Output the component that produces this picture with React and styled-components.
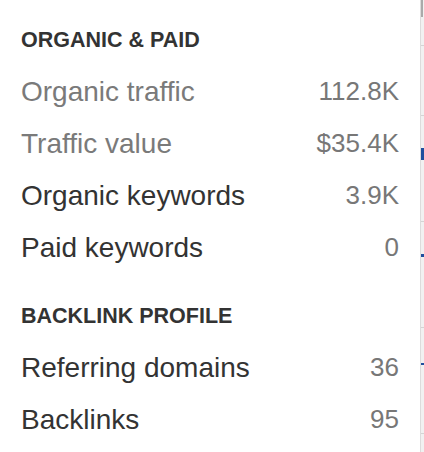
import React from "react";
import styled, { createGlobalStyle } from "styled-components";

const sections = [
  {
    title: "ORGANIC & PAID",
    rows: [
      { label: "Organic traffic", value: "112.8K", muted: true },
      { label: "Traffic value", value: "$35.4K", muted: true },
      { label: "Organic keywords", value: "3.9K" },
      { label: "Paid keywords", value: "0" },
    ],
  },
  {
    title: "BACKLINK PROFILE",
    rows: [
      { label: "Referring domains", value: "36" },
      { label: "Backlinks", value: "95" },
    ],
  },
];

// bits of the page behind the popover that peek out on the right
const ticks = [45, 115, 221, 327, 433];
const marks = [
  { top: 148, height: 12 },
  { top: 254, height: 3 },
  { top: 363, height: 2 },
];

export default function App() {
  return (
    <>
      <GlobalStyle />
      <Screen>
        <Panel>
          {sections.map((s) => (
            <Section key={s.title}>
              <Heading>{s.title}</Heading>
              {s.rows.map((r) => (
                <Row key={r.label}>
                  <Label $muted={r.muted}>{r.label}</Label>
                  <Value>{r.value}</Value>
                </Row>
              ))}
            </Section>
          ))}
        </Panel>
        <Edge>
          <Thumb />
          {ticks.map((t) => (
            <Tick key={t} style={{ top: t }} />
          ))}
          {marks.map((m) => (
            <Mark key={m.top} style={{ top: m.top, height: m.height }} />
          ))}
        </Edge>
      </Screen>
    </>
  );
}

const GlobalStyle = createGlobalStyle`
  html, body {
    margin: 0;
    padding: 0;
    background: #fff;
  }
  body {
    font-family: "Liberation Sans", Arial, sans-serif;
  }
`;

const Screen = styled.div`
  width: 424px;
  height: 452px;
  display: flex;
  overflow: hidden;
  background: #fff;
`;

const Panel = styled.div`
  width: 420px;
  padding: 13.5px 21px 0 21px;
  box-sizing: border-box;
  display: flex;
  flex-direction: column;
  gap: 16px;
`;

const Section = styled.div`
  display: flex;
  flex-direction: column;
`;

const Heading = styled.div`
  height: 52px;
  line-height: 52px;
  font-size: 21.5px;
  font-weight: 700;
  color: #333;
`;

const Row = styled.div`
  height: 52px;
  display: flex;
  align-items: center;
  justify-content: space-between;
`;

const Label = styled.span`
  font-size: 28px;
  color: ${(p) => (p.$muted ? "#7a7a7a" : "#333")};
`;

const Value = styled.span`
  font-size: 26px;
  color: #777;
`;

const Edge = styled.div`
  position: relative;
  width: 4px;
  border-left: 1px solid #dcdcdc;
  background: #f1f1f1;
  box-sizing: border-box;
`;

const Thumb = styled.div`
  position: absolute;
  top: 0;
  left: 0;
  width: 2px;
  height: 17px;
  background: #aaa;
`;

const Tick = styled.div`
  position: absolute;
  left: 0;
  right: 0;
  height: 1px;
  background: #d4d4d4;
`;

const Mark = styled.div`
  position: absolute;
  left: 0;
  right: 0;
  background: #1f4f9e;
`;
